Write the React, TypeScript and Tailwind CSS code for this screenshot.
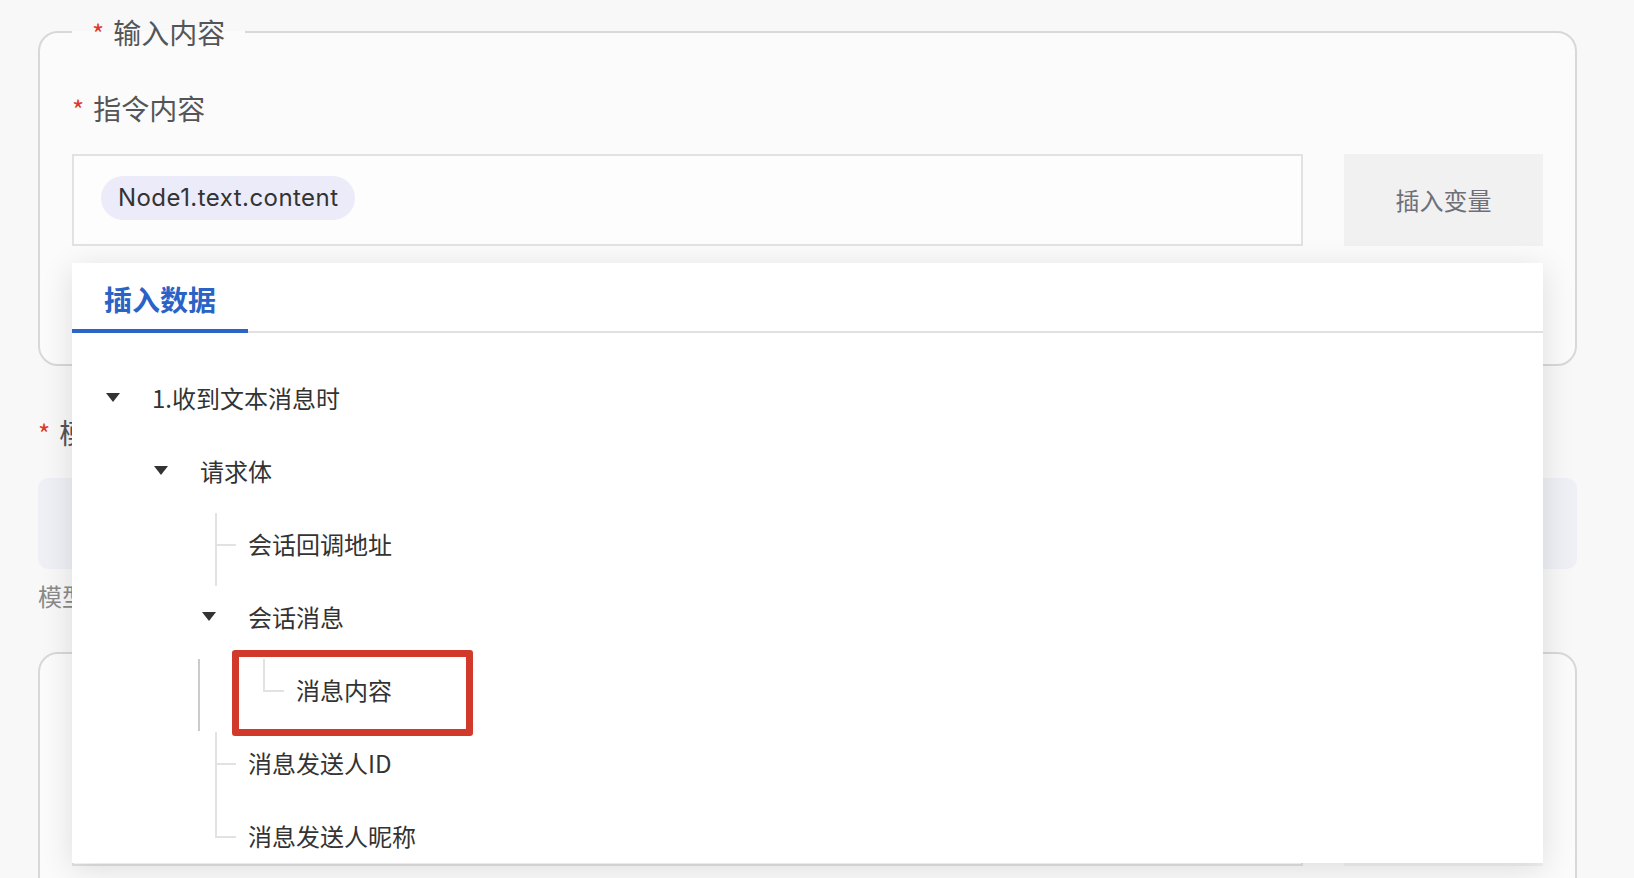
import React from 'react';

const FONT = { fontFamily: '"Noto Sans CJK SC", "Noto Sans", sans-serif' };

type Row = {
  level: number;
  label: string;
  kind: 'expand' | 'mid' | 'last';
};

const rows: Row[] = [
  { level: 0, label: '1.收到文本消息时', kind: 'expand' },
  { level: 1, label: '请求体', kind: 'expand' },
  { level: 2, label: '会话回调地址', kind: 'mid' },
  { level: 2, label: '会话消息', kind: 'expand' },
  { level: 3, label: '消息内容', kind: 'last' },
  { level: 2, label: '消息发送人ID', kind: 'mid' },
  { level: 2, label: '消息发送人昵称', kind: 'last' },
];

const indent = ['w-0', 'w-[48px]', 'w-[96px]', 'w-[144px]'];

function Caret() {
  return (
    <svg width="14" height="9" viewBox="0 0 14 9" className="ml-[2px]">
      <polygon points="0,0 14,0 7,9" fill="#333333" />
    </svg>
  );
}

function Switcher({ kind }: { kind: Row['kind'] }) {
  return (
    <div className="relative h-full w-[48px] shrink-0 flex items-center">
      {kind === 'expand' && <Caret />}
      {kind === 'mid' && (
        <>
          <span className="absolute left-[15px] top-[6px] -bottom-[6px] w-[2px] bg-[#e2e2e2]" />
          <span className="absolute left-[15px] top-1/2 w-[21px] h-[2px] bg-[#e2e2e2]" />
        </>
      )}
      {kind === 'last' && (
        <>
          <span className="absolute left-[15px] top-[6px] bottom-[calc(50%-1px)] w-[2px] bg-[#e2e2e2]" />
          <span className="absolute left-[15px] top-1/2 w-[21px] h-[2px] bg-[#e2e2e2]" />
        </>
      )}
    </div>
  );
}

function Label({ text, className = '' }: { text: string; className?: string }) {
  return (
    <div className={`flex items-center h-[36px] text-[28px] leading-[36px] text-[#555558] ${className}`}>
      <span className="text-[#e0392b] text-[26px] mr-[9px] mt-[2px]">*</span>
      <span>{text}</span>
    </div>
  );
}

function InputRow({ chip }: { chip?: string }) {
  return (
    <div className="flex gap-[41px]">
      <div className="flex-1 h-[92px] border-2 border-[#e2e2e2] bg-[#fdfdfd] flex items-center pl-[27px]">
        {chip && (
          <span
            className="h-[44px] mb-[4px] px-[17px] rounded-full bg-[#ecebfa] text-[#333333] text-[24px] tracking-[0.45px] flex items-center"
            style={{ fontFamily: 'Inter, "Noto Sans", sans-serif' }}
          >
            {chip}
          </span>
        )}
      </div>
      <div className="w-[199px] h-[92px] bg-[#f1f1f1] flex items-center justify-center text-[24px] text-[#6f6f78]">
        插入变量
      </div>
    </div>
  );
}

export default function App() {
  return (
    <div className="relative w-full h-[878px] overflow-hidden bg-[#f8f8f8] pt-[14px] pl-[38px] pr-[57px]" style={FONT}>
      {/* 输入内容 */}
      <fieldset className="border-2 border-[#d8d8d8] rounded-[20px] bg-[#fbfbfb] px-[32px] pt-[40px] pb-[118px]">
        <legend className="px-[20px] h-[36px] flex items-center text-[28px] leading-[36px] text-[#555558]">
          <span className="text-[#e0392b] text-[26px] mr-[9px] mt-[2px]">*</span>
          <span>输入内容</span>
        </legend>
        <Label text="指令内容" />
        <div className="mt-[28px]">
          <InputRow chip="Node1.text.content" />
        </div>
      </fieldset>

      {/* 模型 */}
      <Label text="模型" className="mt-[48px]" />
      <div className="mt-[28px] h-[91px] rounded-[10px] bg-[#eff0f5]" />
      <div className="mt-[9px] h-[36px] leading-[36px] text-[24px] text-[#8a8a8a]">模型</div>

      <div className="mt-[38px] border-2 border-[#d8d8d8] rounded-[20px] bg-[#fbfbfb] px-[32px] pt-[120px] pb-[40px]">
        <InputRow />
      </div>

      {/* 插入数据 dropdown */}
      <div className="absolute left-[72px] top-[263px] w-[1471px] h-[600px] bg-white shadow-[0_6px_30px_rgba(0,0,0,0.12)]">
        <div className="flex items-end h-[70px] border-b-2 border-[#e0e0e0]">
          <div className="h-[70px] -mb-[2px] w-[176px] border-b-4 border-[#2c63c7] pl-[32px] pt-[6px] flex items-center text-[28px] font-bold text-[#2b62c6]">
            插入数据
          </div>
        </div>
        <div className="pt-[28px] pl-[32px]">
          {rows.map((r, i) => (
            <div key={i} className="flex items-center h-[73px]">
              <div className={`${indent[r.level]} shrink-0`} />
              <Switcher kind={r.kind} />
              <span className="text-[24px] text-[#333333] leading-none">{r.label}</span>
            </div>
          ))}
        </div>
        <span className="absolute left-[126px] top-[396px] w-[2px] h-[72px] bg-[#cbcbcb]" />
        <div className="absolute left-[160px] top-[387px] w-[241px] h-[86px] border-[7px] border-[#d13a2b] rounded-[3px]" />
      </div>
    </div>
  );
}
